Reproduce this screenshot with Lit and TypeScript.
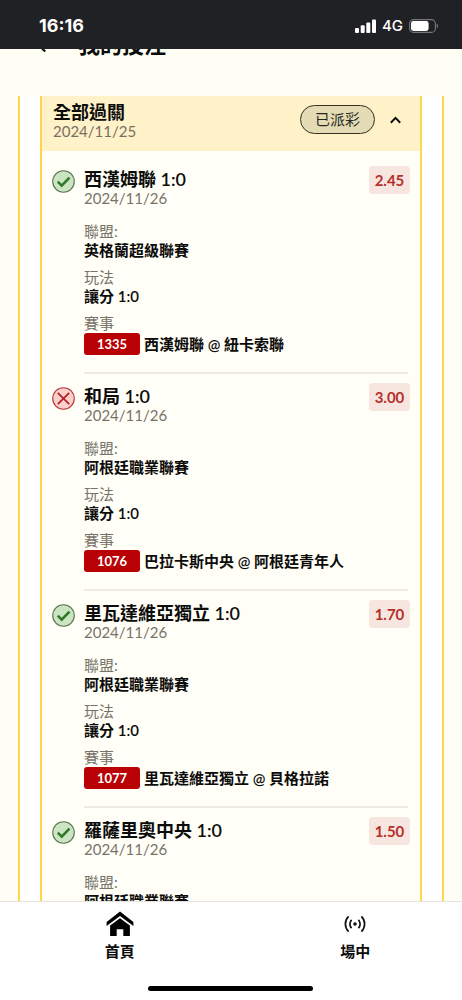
import { LitElement, html, css } from "lit";
import { customElement, property, state } from "lit/decorators.js";

interface Leg {
  won: boolean;
  pick: string;
  date: string;
  odds: string;
  league: string;
  play: string;
  code: string;
  match: string;
}

const LEGS: Leg[] = [
  { won: true, pick: "西漢姆聯 1:0", date: "2024/11/26", odds: "2.45", league: "英格蘭超級聯賽", play: "讓分 1:0", code: "1335", match: "西漢姆聯 @ 紐卡索聯" },
  { won: false, pick: "和局 1:0", date: "2024/11/26", odds: "3.00", league: "阿根廷職業聯賽", play: "讓分 1:0", code: "1076", match: "巴拉卡斯中央 @ 阿根廷青年人" },
  { won: true, pick: "里瓦達維亞獨立 1:0", date: "2024/11/26", odds: "1.70", league: "阿根廷職業聯賽", play: "讓分 1:0", code: "1077", match: "里瓦達維亞獨立 @ 貝格拉諾" },
  { won: true, pick: "羅薩里奧中央 1:0", date: "2024/11/26", odds: "1.50", league: "阿根廷職業聯賽", play: "", code: "", match: "" },
];

@customElement("status-bar")
export class StatusBar extends LitElement {
  static styles = css`
    :host {
      display: flex;
      align-items: center;
      justify-content: space-between;
      box-sizing: border-box;
      height: 49px;
      padding: 2px 23px 0 39px;
      background: #202125;
      color: #fff;
      font-family: Inter, "Liberation Sans", sans-serif;
    }
    .time { font-size: 18px; line-height: 22px; font-weight: 700; }
    .right { display: flex; align-items: center; gap: 6px; }
    .net { font-size: 15px; line-height: 18px; font-weight: 500; }
    svg { display: block; }
  `;
  render() {
    return html`
      <span class="time">16:16</span>
      <span class="right">
        <svg width="21" height="14" viewBox="0 0 21 14" fill="#fff" aria-hidden="true">
          <rect x="0" y="9" width="4" height="5" rx="1" />
          <rect x="5.7" y="6.3" width="4" height="7.7" rx="1" />
          <rect x="11.3" y="3.4" width="4" height="10.6" rx="1" />
          <rect x="17" y="0.4" width="4" height="13.6" rx="1" />
        </svg>
        <span class="net">4G</span>
        <svg width="30" height="14" viewBox="0 0 30 14" aria-hidden="true">
          <rect x="0.6" y="0.6" width="25.8" height="12.8" rx="4" fill="none" stroke="#77787b" stroke-width="1.1" />
          <rect x="2" y="2" width="17.6" height="10" rx="2.4" fill="#fff" />
          <path d="M27.7 4.8a2.4 2.4 0 0 1 0 4.4z" fill="#77787b" />
        </svg>
      </span>
    `;
  }
}

@customElement("bet-leg")
export class BetLeg extends LitElement {
  @property({ attribute: false }) leg!: Leg;

  static styles = css`
    :host { display: flex; gap: 9px; padding: 9px 11px 0 10px; }
    .mark { flex: none; margin-top: 4px; }
    .mark svg { display: block; }
    .body { flex: 1; min-width: 0; margin-right: 1px; padding-bottom: 17px; border-bottom: 2px solid #eeebe6; }
    .top { display: flex; justify-content: space-between; align-items: flex-start; height: 56px; margin-right: -2px; }
    .pick { margin: 0; font-size: 18px; line-height: 20px; font-weight: 600; padding-top: 3px; }
    .date { margin: 0; font-size: 15px; line-height: 18px; color: #767469; }
    .odds {
      box-sizing: border-box;
      width: 41px;
      height: 28px;
      border-radius: 4px;
      background: #f7e6e0;
      color: #b52f2b;
      font-size: 15px;
      line-height: 28px;
      font-weight: 700;
      text-align: center;
    }
    dl { margin: 0; font-size: 15px; line-height: 19px; }
    dt { color: #767469; }
    dd { margin: 0 0 8px; font-weight: 600; white-space: nowrap; }
    dd.match { display: flex; align-items: center; gap: 4px; margin: 0; height: 22px; }
    .code {
      width: 56px;
      height: 22px;
      border-radius: 3px;
      background: #b90005;
      color: #fff;
      font-size: 13px;
      line-height: 22px;
      font-weight: 700;
      text-align: center;
    }
  `;
  render() {
    const l = this.leg;
    return html`
      <span class="mark">
        ${l.won
          ? html`<svg width="23" height="23" viewBox="0 0 23 23" role="img" aria-label="贏">
              <circle cx="11.5" cy="11.5" r="10.8" fill="#cbe5c3" stroke="#58754f" stroke-width="1.1" />
              <path d="M5.8 11.7l3.9 3.9 7.8-8" fill="none" stroke="#32782a" stroke-width="2.6" />
            </svg>`
          : html`<svg width="23" height="23" viewBox="0 0 23 23" role="img" aria-label="輸">
              <circle cx="11.5" cy="11.5" r="10.8" fill="#fbcfca" stroke="#b23a3c" stroke-width="1.1" />
              <path d="M5.8 5.8l11.4 11.4M17.2 5.8L5.8 17.2" fill="none" stroke="#b71d25" stroke-width="1.7" />
            </svg>`}
      </span>
      <div class="body">
        <div class="top">
          <div>
            <h3 class="pick">${l.pick}</h3>
            <p class="date">${l.date}</p>
          </div>
          <span class="odds">${l.odds}</span>
        </div>
        <dl>
          <dt>聯盟:</dt>
          <dd>${l.league}</dd>
          ${l.play ? html`<dt>玩法</dt><dd>${l.play}</dd>` : null}
          ${l.match
            ? html`<dt>賽事</dt><dd class="match"><span class="code">${l.code}</span><span>${l.match}</span></dd>`
            : null}
        </dl>
      </div>
    `;
  }
}

@customElement("app-root")
export class AppRoot extends LitElement {
  @state() private open = true;

  static styles = css`
    :host {
      display: flex;
      flex-direction: column;
      height: 100vh;
      overflow: hidden;
      position: relative;
      background: #fffef4;
      color: #0c0c0a;
      font-family: Lato, "Noto Sans CJK TC", sans-serif;
    }
    status-bar { position: absolute; top: 0; left: 0; right: 0; z-index: 1; }
    .head {
      flex: none;
      display: flex;
      align-items: center;
      gap: 29px;
      box-sizing: border-box;
      height: 96px;
      padding: 0 36px 6px;
    }
    .title { margin: 0; font-size: 22px; line-height: 26px; font-weight: 600; }
    button { border: 0; background: none; padding: 0; color: inherit; font: inherit; cursor: pointer; }
    svg { display: block; }
    .scroll { flex: 1; min-height: 0; overflow-y: auto; scrollbar-width: none; }
    .outer { margin: 0 18px; padding: 0 20px; border: solid #fdd649; border-width: 0 2px; background: #fff; }
    .ticket { border: solid #fdd649; border-width: 0 2px; background: #fffef7; }
    .summary {
      display: flex;
      align-items: center;
      box-sizing: border-box;
      height: 55px;
      padding: 0 19px 8px 11px;
      background: #fff1c8;
    }
    .info { flex: 1; padding-top: 2px; }
    .kind { margin: 0; font-size: 18px; line-height: 20px; font-weight: 600; }
    .date { margin: 0; font-size: 15px; line-height: 18px; color: #767064; }
    .paid {
      box-sizing: border-box;
      height: 29px;
      padding: 0 14px;
      border: 1px solid #35321f;
      border-radius: 15px;
      background: #e4dcb5;
      color: #29271c;
      font-size: 15px;
      line-height: 27px;
    }
    .toggle { margin-left: 15px; }
    .legs { padding: 6px 0 40px; }
    .nav {
      flex: none;
      display: grid;
      grid-template-columns: 1fr 1fr;
      gap: 36px;
      box-sizing: border-box;
      height: 99px;
      padding: 9px 7px 0 20px;
      border-top: 1px solid #e6e4df;
      background: #fff;
      position: relative;
    }
    .nav a {
      display: flex;
      flex-direction: column;
      align-items: center;
      gap: 3px;
      color: inherit;
      text-decoration: none;
      font-size: 15px;
      line-height: 22px;
      font-weight: 600;
    }
    .grip {
      position: absolute;
      left: 50%;
      bottom: 9px;
      width: 165px;
      height: 5px;
      margin-left: -83px;
      border-radius: 3px;
      background: #000;
    }
  `;
  render() {
    return html`
      <status-bar></status-bar>
      <header class="head">
        <button aria-label="返回">
          <svg width="13" height="16" viewBox="0 0 13 16" fill="none" stroke="#0c0c0a" stroke-width="2.2"><path d="M9.2 1.5L2.5 8l6.7 6.5" /></svg>
        </button>
        <h1 class="title">我的投注</h1>
      </header>
      <main class="scroll">
        <div class="outer">
          <section class="ticket">
            <div class="summary">
              <div class="info">
                <h2 class="kind">全部過關</h2>
                <p class="date">2024/11/25</p>
              </div>
              <span class="paid">已派彩</span>
              <button class="toggle" aria-label="收合" aria-expanded=${this.open} @click=${() => (this.open = !this.open)}>
                <svg width="11" height="8" viewBox="0 0 11 8" fill="none" stroke="#0c0c0a" stroke-width="2"><path d="M0.8 6.7L5.5 1.9l4.7 4.8" /></svg>
              </button>
            </div>
            ${this.open
              ? html`<div class="legs">${LEGS.map((l) => html`<bet-leg .leg=${l}></bet-leg>`)}</div>`
              : null}
          </section>
        </div>
      </main>
      <nav class="nav">
        <a href="#home">
          <svg width="28" height="26" viewBox="0 0 28 26" fill="#000" aria-hidden="true">
            <path d="M14 0.6L27.4 11v3.9L14 5 0.6 14.9V11z" />
            <path d="M14 7.2l9.9 7.4V25h-6.6v-6.8h-6.6V25H4.1V14.6z" />
          </svg>
          <span>首頁</span>
        </a>
        <a href="#live">
          <svg width="22" height="26" viewBox="0 0 22 26" fill="none" stroke="#111" stroke-width="1.7" aria-hidden="true">
            <circle cx="11" cy="13" r="1.8" fill="#111" stroke="none" />
            <path d="M7.6 8.8a6 6 0 0 0 0 8.4M14.4 8.8a6 6 0 0 1 0 8.4M4.6 5.4a10.6 10.6 0 0 0 0 15.2M17.4 5.4a10.6 10.6 0 0 1 0 15.2" />
          </svg>
          <span>場中</span>
        </a>
        <div class="grip"></div>
      </nav>
    `;
  }
}
